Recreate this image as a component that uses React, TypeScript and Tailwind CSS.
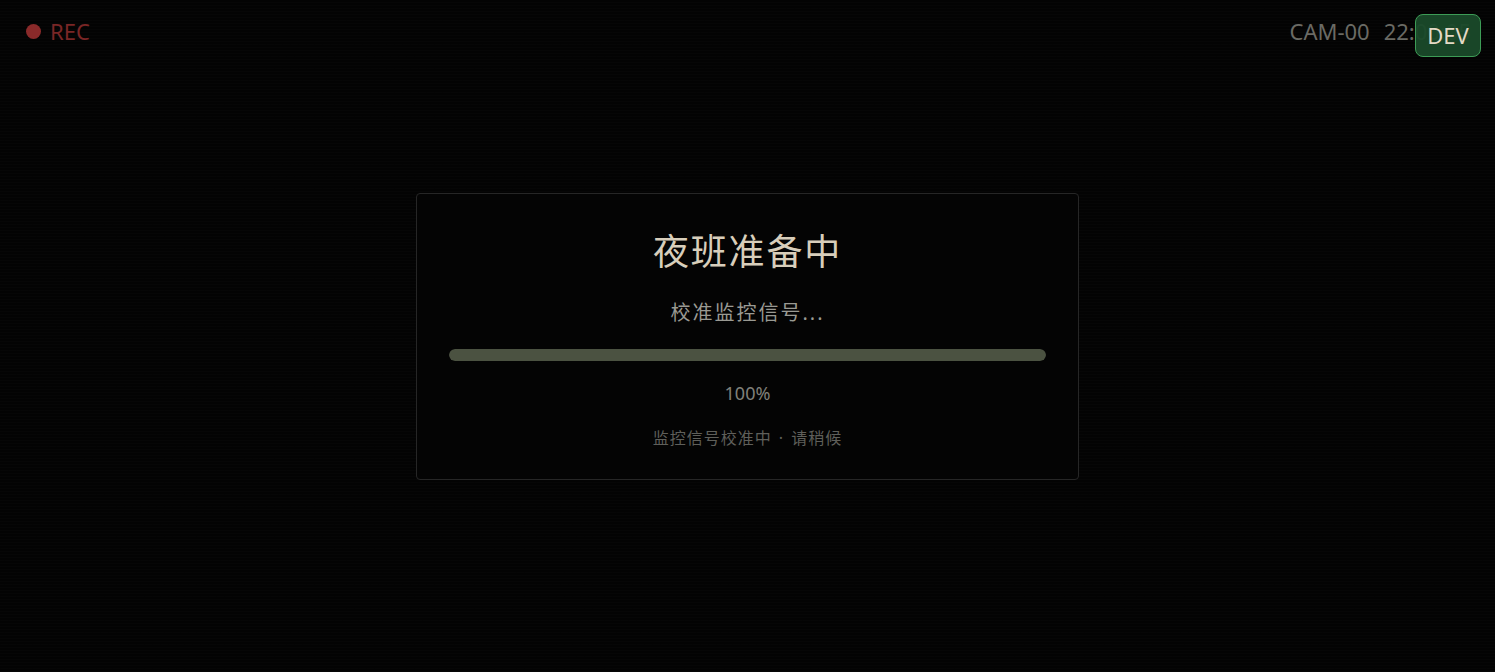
import React from "react";

const font = { fontFamily: '"Noto Sans", "Noto Sans CJK SC", sans-serif' };

function TopBar() {
  return (
    <div className="flex h-[62px] items-center justify-between pl-[26px] pr-6 text-[22px]">
      {/* recording indicator */}
      <div className="flex items-center gap-[9px]">
        <span className="size-[15px] rounded-full bg-[#8a2a2a]" />
        <span className="text-[#7a2626]">REC</span>
      </div>
      <div className="flex items-center gap-[14px] text-[#6a6a64]">
        <span>CAM-00</span>
        <span>22:00:05</span>
      </div>
    </div>
  );
}

function LoadingCard({ progress }: { progress: number }) {
  return (
    <div className="flex w-[663px] flex-col items-center rounded border border-[#262626] bg-[#040404] px-8 pt-8 pb-[31px]">
      <h1 className="h-[52px] text-[36px] leading-[52px] tracking-wider text-[#d8cebb]">夜班准备中</h1>
      <p className="mt-[21px] text-[20px] leading-[28px] tracking-[0.1em] text-[#9a9a93]">校准监控信号...</p>

      {/* progress bar */}
      <div className="mt-[22px] h-3 w-full overflow-hidden rounded-full bg-[#1c1e1a]">
        <div className="h-full rounded-full bg-[#4b5241]" style={{ width: `${progress}%` }} />
      </div>

      <p className="mt-[18px] text-[18px] leading-[28px] text-[#80807a]">{progress}%</p>
      <p className="mt-[21px] flex items-center text-[16px] leading-[20px] tracking-[1px] text-[#5f5f5a]">
        <span>监控信号校准中</span>
        <span className="mx-[7px]">·</span>
        <span>请稍候</span>
      </p>
    </div>
  );
}

export default function App() {
  return (
    <div
      className="relative flex h-[672px] w-full flex-col overflow-hidden bg-[#030303] bg-[repeating-linear-gradient(0deg,rgba(255,255,255,0.012)_0px,rgba(255,255,255,0.012)_1px,transparent_1px,transparent_3px)]"
      style={font}
    >
      <TopBar />

      <div className="absolute inset-0 flex items-center justify-center">
        <LoadingCard progress={100} />
      </div>

      {/* dev toggle */}
      <button
        type="button"
        className="absolute top-[14px] right-[14px] flex h-[43px] w-[66px] items-center justify-center rounded-lg border border-[#3d9c56] bg-[#1a4a2a]/95 text-[22px] text-[#e4dac6]"
      >
        DEV
      </button>
    </div>
  );
}
